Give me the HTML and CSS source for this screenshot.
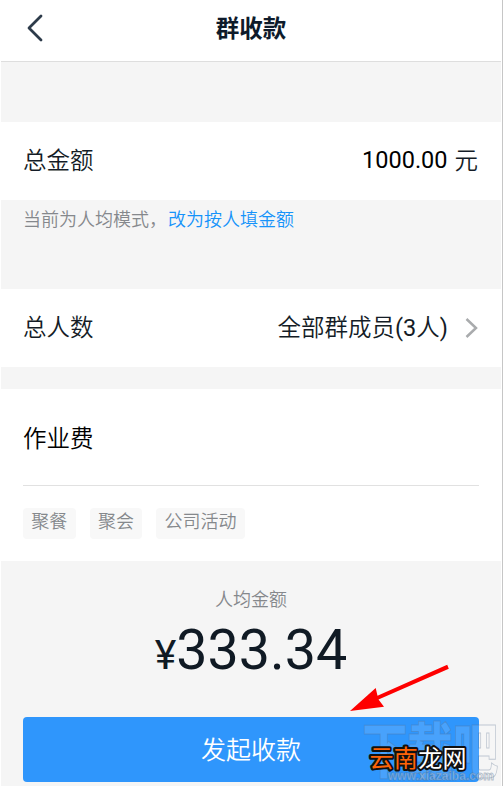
FILE: index.html
```html
<!DOCTYPE html>
<html lang="zh-CN">
<head>
<meta charset="utf-8">
<meta name="viewport" content="width=device-width, initial-scale=1">
<title>群收款</title>
<link rel="stylesheet" href="styles.css">
</head>
<body>
<div class="page">
  <header class="header">
    <svg class="back" viewBox="0 0 16 28" width="16" height="28"><path d="M14 2L2 14L14 26" fill="none" stroke="#2d3b4a" stroke-width="2.8" stroke-linecap="round" stroke-linejoin="round"/></svg>
    <h1 class="title">群收款</h1>
  </header>
  <main class="content">
    <section class="row">
      <span class="label">总金额</span>
      <span class="amount"><span class="digits">1000.00</span><span class="unit">元</span></span>
    </section>
    <p class="hint"><span class="mode">当前为人均模式，</span><a class="link">改为按人填金额</a></p>
    <section class="row">
      <span class="label">总人数</span>
      <span class="members">全部群成员<span class="latin">(3</span>人<span class="latin">)</span></span>
      <svg class="chevron" viewBox="0 0 13 20" width="13" height="20"><path d="M1.500 1L11 10L1.500 19" fill="none" stroke="#a9abad" stroke-width="2.5"/></svg>
    </section>
    <section class="purpose">
      <div class="reason">作业费</div>
      <div class="tags">
        <span class="tag">聚餐</span>
        <span class="tag">聚会</span>
        <span class="tag">公司活动</span>
      </div>
    </section>
    <section class="summary">
      <div class="caption">人均金额</div>
      <div class="total"><span class="yen">¥</span><span class="sum">333.34</span></div>
      <div class="submit">发起收款</div>
    </section>
  </main>
  <svg class="overlay" viewBox="0 0 163 136" width="163" height="136">
    <path d="M107.200 14.800L37.500 45.700L35.700 38L10 61L44 56.800L38.500 49.600L108.800 18.800Z" fill="#fe0000"/>
    <text class="mark" x="22" y="123" textLength="136" lengthAdjust="spacingAndGlyphs">下载吧</text>
    <text class="url" x="48" y="129.500" textLength="106" lengthAdjust="spacingAndGlyphs">www.xiazaiba.com</text>
    <text class="brand" x="29.500" y="116.500" textLength="97"><tspan class="brand-hot">云南</tspan><tspan>龙网</tspan></text>
  </svg>
</div>
</body>
</html>
```
FILE: styles.css
```css
* { box-sizing: border-box; }
body {
  margin: 0;
  background: #fff;
  font-family: Roboto, "Noto Sans CJK SC", sans-serif;
  font-weight: 350;
  color: #141c26;
}
.page {
  position: relative;
  width: 503px;
  height: 786px;
  padding: 0 1px;
  border-right: 1px solid #c6c6c6;
  overflow: hidden;
}
.header {
  display: grid;
  grid-template-columns: 70px 1fr 70px;
  align-items: center;
  height: 62px;
  padding-bottom: 5px;
  border-bottom: 1px solid #dedede;
}
.back { margin-left: 26px; }
.title {
  margin: 0;
  padding-top: 2px;
  text-align: center;
  font-size: 23.5px;
  line-height: 34px;
  font-weight: 700;
  color: #0e1b2b;
}
.content { padding-top: 60px; background: #f5f5f5; height: 724px; }
.row {
  display: flex;
  align-items: center;
  height: 78px;
  padding: 0 23px 5px 22px;
  background: #fff;
  font-size: 23.5px;
}
.label { flex: 1; }
.amount { display: flex; align-items: baseline; gap: 7px; }
.digits { position: relative; top: -1px; font-weight: 400; color: #000; }
.latin { font-weight: 400; }
.members { margin-right: 17px; }
.chevron { position: relative; top: 2px; }
.hint {
  display: flex;
  margin: 0;
  height: 89px;
  padding: 6px 22px;
  font-size: 18px;
  line-height: 27px;
}
.mode { width: 145px; white-space: nowrap; color: #85888c; }
.link { color: #1593fa; }
.purpose {
  height: 172px;
  margin-top: 22px;
  padding: 0 22px;
  background: #fff;
}
.reason {
  height: 97px;
  padding-top: 2px;
  border-bottom: 1px solid #e1e1e1;
  font-size: 23.5px;
  line-height: 97px;
  color: #000;
}
.tags { display: flex; gap: 14px; padding-top: 22px; }
.tag {
  height: 31px;
  padding: 0 8.3px;
  border-radius: 4px;
  background: #f8f8f8;
  color: #85888c;
  font-size: 18px;
  line-height: 28px;
}
.summary { display: flex; flex-direction: column; padding: 25px 22px 0; text-align: center; }
.caption { font-size: 18px; line-height: 27px; color: #85888c; }
.total { height: 103.5px; line-height: 74px; font-weight: 400; color: #101a24; }
.yen { font-size: 41px; }
.sum { font-size: 55.6px; }
.submit {
  height: 65.5px;
  border-radius: 4px;
  background: #2f96fc;
  color: #fff;
  font-size: 25px;
  line-height: 68px;
}
.overlay { position: absolute; left: 340px; top: 650px; }
.mark {
  font: 900 60px "Noto Sans CJK SC", sans-serif;
  fill: rgba(255, 255, 255, .12);
  stroke: rgba(85, 110, 140, .33);
  stroke-width: 1px;
}
.url {
  font: 700 12px "Liberation Sans", sans-serif;
  fill: rgba(255, 255, 255, .35);
  stroke: rgba(85, 110, 140, .42);
  stroke-width: .9px;
}
.brand {
  font: 400 24px "Noto Sans CJK SC", sans-serif;
  fill: #fff;
  stroke: #111;
  stroke-width: 4px;
  stroke-linejoin: round;
  paint-order: stroke;
}
.brand-hot { fill: #ff6408; }
```
